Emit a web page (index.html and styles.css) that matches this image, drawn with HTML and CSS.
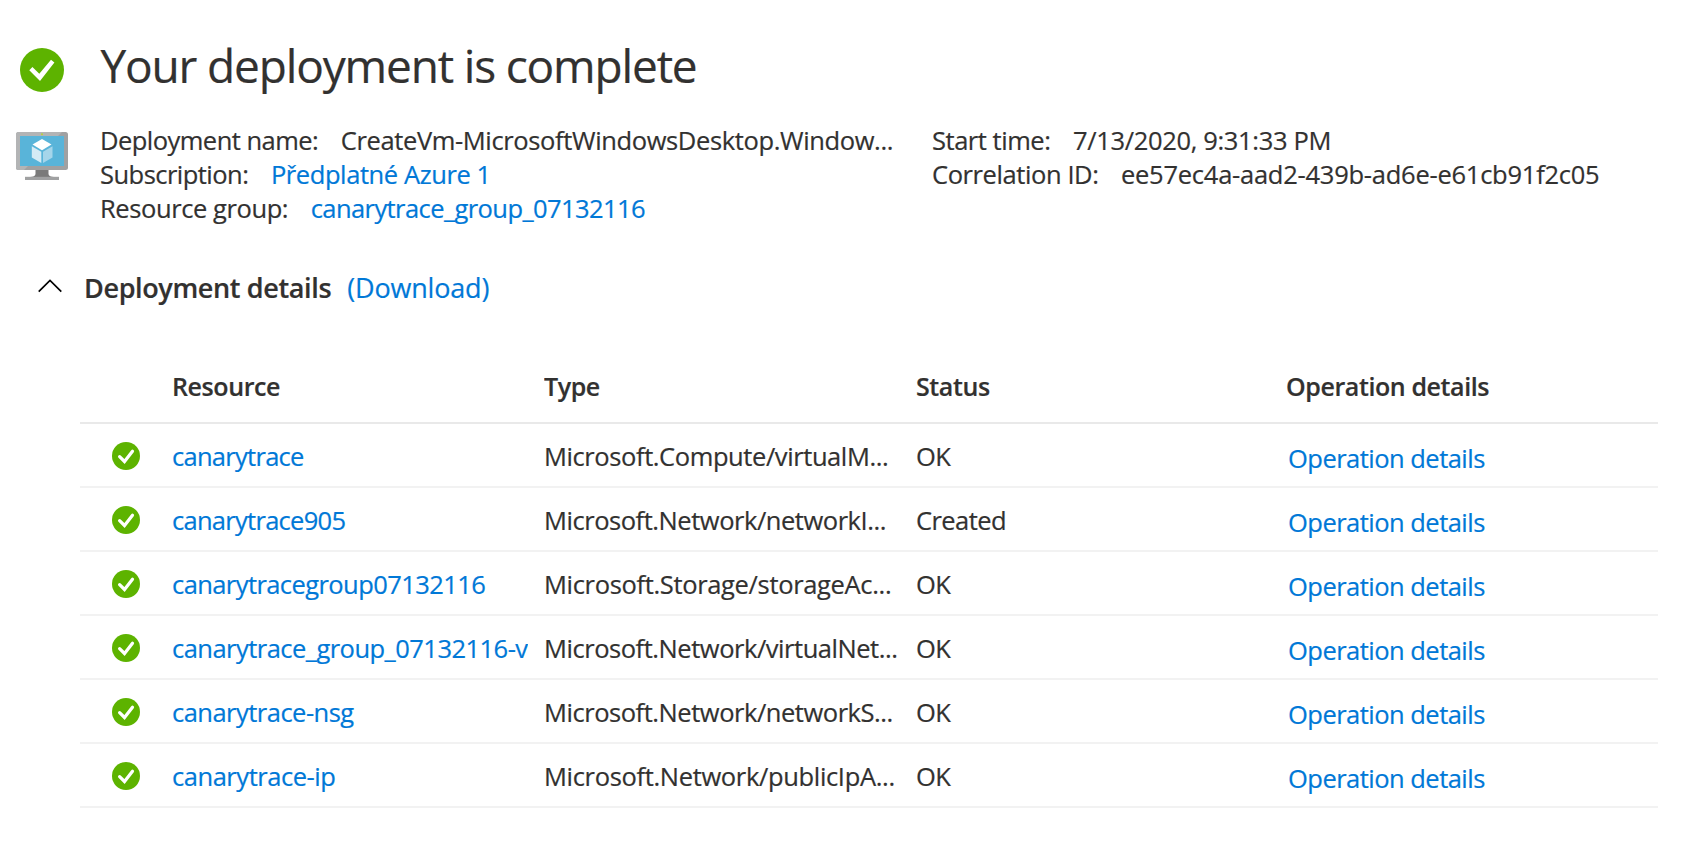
FILE: index.html
```
<!DOCTYPE html>
<html lang="en">
<head>
<meta charset="utf-8">
<title>Your deployment is complete</title>
<link rel="stylesheet" href="styles.css">
</head>
<body>
<svg class="sprite" width="0" height="0" aria-hidden="true">
  <symbol id="check" viewBox="0 0 44 44">
    <circle cx="22" cy="22" r="22" fill="#5db300"/>
    <path d="M9.3 22.2 12.4 19 19.3 25.7 31 11.7 34.4 14.5 20 33Z" fill="#fff"/>
  </symbol>
  <symbol id="check-small" viewBox="0 0 28 28">
    <circle cx="14" cy="14" r="14" fill="#5db300"/>
    <path d="M7.6 14.6 12.5 19.5 20.5 9.3" fill="none" stroke="#fff" stroke-width="3.2" stroke-linecap="round"/>
  </symbol>
</svg>
<main class="page">
  <header class="title-row">
    <svg class="title-icon"><use href="#check"/></svg>
    <h1 class="title">Your deployment is complete</h1>
  </header>
  <section class="summary">
    <svg class="vm-icon" viewBox="0 0 52 48">
      <rect x="0" y="0" width="52" height="38" rx="2.5" fill="#a0a1a2"/>
      <path d="M2.5 0H46L8 38H2.5A2.5 2.5 0 0 1 0 35.500V2.500A2.500 2.500 0 0 1 2.500 0Z" fill="#b3b4b5"/>
      <rect x="4" y="4" width="44" height="30" fill="#59b4d9"/>
      <circle cx="26" cy="2.200" r="1" fill="#b8d432"/>
      <path d="M19.500 38H32.500V42C32.500 44 35 45 38 45H14C17 45 19.500 44 19.500 42Z" fill="#7a7a7a"/>
      <rect x="9" y="44.800" width="34" height="3.200" fill="#a0a1a2"/>
      <path d="M26 7 35.500 12.500 26 18.300 16.500 12.500Z" fill="#fff"/>
      <path d="M15.800 14.300 25.300 19.800V31L15.800 25.500Z" fill="#d4ebf5"/>
      <path d="M36.500 14.300 27 19.800V31L36.500 25.500Z" fill="#a5d5ea"/>
    </svg>
    <dl class="facts facts-main">
      <div class="fact"><dt class="ls-53">Deployment name:</dt><dd class="ls-37">CreateVm-MicrosoftWindowsDesktop.Window...</dd></div>
      <div class="fact"><dt class="ls-53">Subscription:</dt><dd class="ls-41"><a>Předplatné Azure 1</a></dd></div>
      <div class="fact"><dt class="ls-41">Resource group:</dt><dd class="ls-58"><a>canarytrace_group_07132116</a></dd></div>
    </dl>
    <dl class="facts">
      <div class="fact"><dt class="ls-46">Start time:</dt><dd class="ls-34">7/13/2020, 9:31:33 PM</dd></div>
      <div class="fact"><dt class="ls-41">Correlation ID:</dt><dd class="ls-25">ee57ec4a-aad2-439b-ad6e-e61cb91f2c05</dd></div>
    </dl>
  </section>
  <section class="details">
    <div class="details-head">
      <svg class="chevron" viewBox="0 0 24 14"><path d="M.7 12.700 12 1.400 23.300 12.700" fill="none" stroke="#000" stroke-width="1.700"/></svg>
      <h2 class="details-title">Deployment details</h2>
      <a class="download">(Download)</a>
    </div>
    <div class="table">
      <div class="row head"><span></span><span>Resource</span><span>Type</span><span>Status</span><span>Operation details</span></div>
      <div class="row"><svg class="ok"><use href="#check-small"/></svg><a class="ls-72">canarytrace</a><span class="ls-41">Microsoft.Compute/virtualM...</span><span class="ls-52">OK</span><a class="op">Operation details</a></div>
      <div class="row"><svg class="ok"><use href="#check-small"/></svg><a class="ls-72">canarytrace905</a><span class="ls-46">Microsoft.Network/networkI...</span><span class="ls-58">Created</span><a class="op">Operation details</a></div>
      <div class="row"><svg class="ok"><use href="#check-small"/></svg><a class="ls-58">canarytracegroup07132116</a><span class="ls-34">Microsoft.Storage/storageAc...</span><span class="ls-52">OK</span><a class="op">Operation details</a></div>
      <div class="row"><svg class="ok"><use href="#check-small"/></svg><a class="ls-53">canarytrace_group_07132116-v</a><span class="ls-46">Microsoft.Network/virtualNet...</span><span class="ls-52">OK</span><a class="op">Operation details</a></div>
      <div class="row"><svg class="ok"><use href="#check-small"/></svg><a class="ls-52">canarytrace-nsg</a><span class="ls-46">Microsoft.Network/networkS...</span><span class="ls-52">OK</span><a class="op">Operation details</a></div>
      <div class="row"><svg class="ok"><use href="#check-small"/></svg><a class="ls-46">canarytrace-ip</a><span class="ls-34">Microsoft.Network/publicIpA...</span><span class="ls-52">OK</span><a class="op">Operation details</a></div>
    </div>
  </section>
</main>
</body>
</html>
```
FILE: styles.css
```
* { box-sizing: border-box; }
body {
  margin: 0;
  background: #fff;
  color: #323130;
  font-family: "Open Sans", "Noto Sans", sans-serif;
  font-size: 25.5px;
  line-height: 34px;
  -webkit-text-stroke: .2px;
  overflow: hidden;
}
a { color: #0078d7; }
h1, h2, dl, dd { margin: 0; }
.sprite { position: absolute; }
.page { height: 848px; padding-top: 34px; white-space: nowrap; }

.title-row { display: flex; height: 60px; padding-left: 20px; }
.title-icon { width: 44px; height: 44px; margin-top: 14px; }
.title {
  margin-left: 36.5px;
  font-size: 46px;
  font-weight: 400;
  line-height: 62px;
  letter-spacing: -1.16px;
}

.summary { display: flex; padding: 29px 0 0 16px; }
.vm-icon { width: 52px; height: 48px; margin: 9px 32px 0 0; }
.facts-main { width: 832px; }
.fact { display: flex; gap: 22.5px; }

.details-head { display: flex; align-items: center; height: 40px; margin-top: 43px; padding-left: 38px; font-size: 27px; }
.chevron { width: 24px; height: 14px; margin-bottom: 4px; }
.details-title { margin-left: 22px; font-size: 27px; font-weight: 600; letter-spacing: -.36px; }
.download { margin-left: 16px; letter-spacing: -.18px; }

.table { width: 1578px; margin: 56px 0 0 80px; }
.row {
  display: grid;
  grid-template-columns: 92px 372px 372px 370px 1fr;
  height: 64px;
  padding-top: 2px;
  border-bottom: 2px solid #f2f2f2;
  line-height: 60px;
}
.row > * { overflow: hidden; }
.row > a:nth-child(2) { margin-right: 16px; }
.row > .ok { width: 28px; height: 28px; margin: 16px 0 0 32px; }
.row > .op { padding: 2px 0 0 2px; letter-spacing: -.52px; }
.row.head {
  height: 60px;
  padding-top: 0;
  border-color: #e9e9e9;
  font-size: 25px;
  font-weight: 600;
  line-height: 44px;
  letter-spacing: -.4px;
}

/* tracking steps, in hundredths of a pixel */
.ls-25 { letter-spacing: -.25px; }
.ls-34 { letter-spacing: -.34px; }
.ls-37 { letter-spacing: -.37px; }
.ls-41 { letter-spacing: -.41px; }
.ls-46 { letter-spacing: -.46px; }
.ls-52 { letter-spacing: -.52px; }
.ls-53 { letter-spacing: -.53px; }
.ls-58 { letter-spacing: -.58px; }
.ls-72 { letter-spacing: -.72px; }
```
